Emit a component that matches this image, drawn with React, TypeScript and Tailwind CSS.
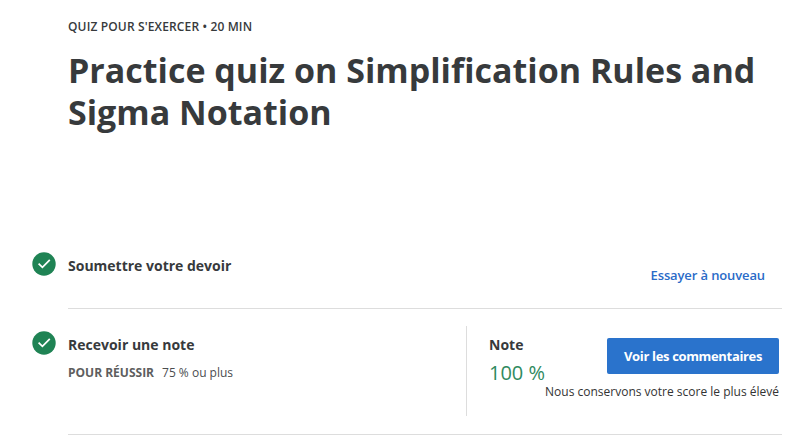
function Check() {
  return (
    <svg className="block size-6 shrink-0" viewBox="0 0 24 24" fill="none">
      <circle cx="12" cy="12" r="11.7" fill="#1f8354" />
      <path d="M6.6 11.6l3.8 3.8 7.4-7.6" stroke="#fff" strokeWidth="1.7" />
    </svg>
  );
}

export default function App() {
  return (
    <main className="h-[446px] w-[800px] overflow-hidden bg-white pl-8 font-['Open_Sans',sans-serif] text-[#373a3c]">
      <header className="h-[234px] pt-[18px] pl-9">
        <p className="text-[12px] leading-[18px] font-semibold tracking-[0.14px]">QUIZ POUR S'EXERCER • 20 MIN</p>
        <h1 className="mt-[13px] w-[720px] text-[34px] leading-[42px] font-bold">Practice quiz on Simplification Rules and Sigma Notation</h1>
      </header>
      <section className="flex h-[75px] pt-[18px]">
        <Check />
        <div className="ml-3 flex w-[714px] justify-between border-b border-[#dddddd]">
          <h2 className="mt-[3px] text-[14px] leading-[21px] font-bold">Soumettre votre devoir</h2>
          <a className="mt-3 mr-[17px] text-[13px] leading-[22px] font-semibold tracking-[-0.12px] text-[#2a6bc8]">Essayer à nouveau</a>
        </div>
      </section>
      <section className="flex h-[126px] pt-[17px]">
        <div className="pt-[5px]"><Check /></div>
        <div className="ml-3 flex w-[714px] border-b border-[#dddddd]">
          <div className="w-[398px] pt-2">
            <h2 className="text-[14px] leading-[21px] font-bold">Recevoir une note</h2>
            <p className="mt-[9px] flex gap-2 text-[12px] leading-[18px]"><span className="font-bold text-[#5e5e5e]">POUR RÉUSSIR</span><span className="text-[#4b4d50]">75 % ou plus</span></p>
          </div>
          <div className="flex h-[90px] flex-1 border-l border-[#dddddd] pl-[22px]">
            <div className="w-14 shrink-0 pt-2">
              <h2 className="text-[14px] leading-[21px] font-bold">Note</h2>
              <p className="mt-1 text-[20px] leading-[28px] whitespace-nowrap text-[#2f8a60]">100 %</p>
            </div>
            <div className="flex w-[234px] flex-col items-end pt-3">
              <button className="h-9 w-[172px] rounded-[2px] bg-[#2a73cc] pt-px text-[13px] font-bold tracking-[-0.34px] text-white">Voir les commentaires</button>
              <p className="mt-[9px] text-[12px] leading-[18px] whitespace-nowrap text-[#333333]">Nous conservons votre score le plus élevé</p>
            </div>
          </div>
        </div>
      </section>
    </main>
  );
}
